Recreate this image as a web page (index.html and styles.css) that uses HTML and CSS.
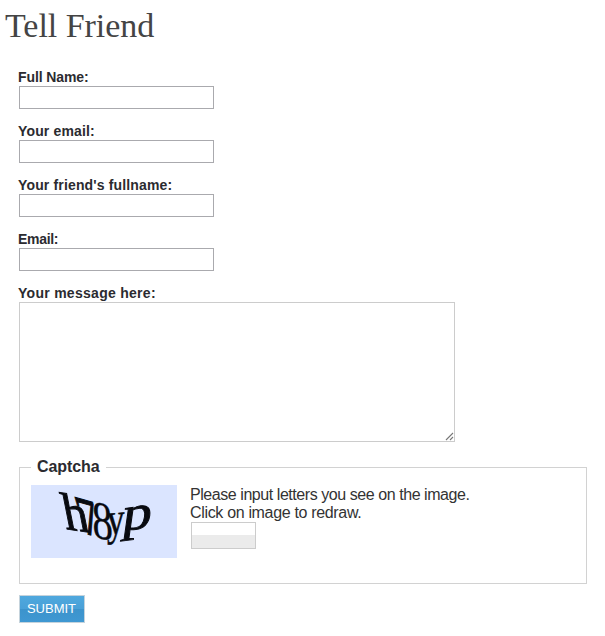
FILE: index.html
```html
<!DOCTYPE html>
<html lang="en">
<head>
<meta charset="utf-8">
<title>Tell Friend</title>
<link rel="stylesheet" href="styles.css">
</head>
<body>
<h1 class="title">Tell Friend</h1>
<form class="form">
  <div class="field"><label class="label" for="name">Full Name:</label><input class="input" id="name" type="text"></div>
  <div class="field"><label class="label mail" for="mail">Your email:</label><input class="input" id="mail" type="text"></div>
  <div class="field"><label class="label friend" for="friend">Your friend's fullname:</label><input class="input" id="friend" type="text"></div>
  <div class="field"><label class="label fmail" for="fmail">Email:</label><input class="input" id="fmail" type="text"></div>
  <div class="field"><label class="label message" for="message">Your message here:</label>
    <div class="area"><textarea class="textarea" id="message"></textarea>
      <svg class="grip" width="9" height="9" viewBox="0 0 9 9"><path d="M1 8L8 1M5 8L8 5" stroke="#777" stroke-width="1.1" fill="none"/></svg>
    </div>
  </div>
  <fieldset class="captcha">
    <legend class="legend">Captcha</legend>
    <div class="captcha-row">
      <svg class="captcha-image" width="146" height="73" viewBox="0 0 146 73">
        <g class="glyphs">
          <text transform="matrix(.95 .14 .2 1 35 44)" font-size="53" stroke-width="1">h</text>
          <text transform="matrix(.78 .22 .3 1 52 48)" font-size="56" stroke-width="1">7</text>
          <text transform="matrix(.76 .15 .05 1 62 52)" font-size="54" stroke-width=".3">8</text>
          <text transform="matrix(.76 -.06 0 1 76 50)" font-size="46" stroke-width=".5">y</text>
          <text transform="matrix(1.2 -.16 -.14 1 90 46)" font-size="49" stroke-width=".9">p</text>
        </g>
      </svg>
      <div class="captcha-side">
        <div class="hint wide">Please input letters you see on the image.</div>
        <div class="hint">Click on image to redraw.</div>
        <input class="code" type="text" aria-label="Letters">
      </div>
    </div>
  </fieldset>
  <button class="submit" type="button">SUBMIT</button>
</form>
</body>
</html>
```
FILE: styles.css
```css
* { box-sizing: border-box; }
body { margin: 0; background: #fff; color: #333; font-family: "Liberation Sans", Arial, sans-serif; }
.title {
  margin: 0; padding: 6px 0 0 5px; height: 68px;
  font: 400 34px/40px Georgia, "Liberation Serif", serif;
  letter-spacing: -.05px; color: #444;
}
.form { padding-left: 18px; }
.field { height: 54px; }
.label { display: block; height: 18px; font-size: 14px; line-height: 18px; font-weight: 700; color: #2b2b30; white-space: nowrap; letter-spacing: -.1px; }
.mail { letter-spacing: .15px; }
.friend { letter-spacing: .15px; }
.fmail { letter-spacing: -.3px; }
.message { letter-spacing: .28px; }
.input { display: block; width: 195px; height: 23px; margin: 0 0 0 1px; padding: 2px; border: 1px solid #aaaaae; outline: 0; }
.area { position: relative; width: 436px; margin-left: 1px; }
.textarea { display: block; width: 436px; height: 140px; margin: 0; padding: 4px; border: 1px solid #ccc; resize: none; outline: 0; font: 13px "Liberation Sans", sans-serif; }
.grip { position: absolute; right: 1px; bottom: 1px; }
.captcha { margin: 120px 0 0 1px; width: 568px; height: 126px; padding: 0 0 0 11px; border: 1px solid #d2d2d2; }
.legend { height: 18px; padding: 0 7px 0 6px; font-size: 16px; line-height: 18px; font-weight: 700; color: #2b2b30; letter-spacing: -.1px; }
.captcha-row { display: flex; gap: 13px; padding-top: 9px; }
.captcha-image { display: block; flex: none; background: #dbe5ff; }
.glyphs { font-family: "Liberation Serif", serif; fill: #080a10; stroke: #080a10; }
.captcha-side { padding-top: 1px; }
.hint { font-size: 16px; line-height: 18px; white-space: nowrap; letter-spacing: -.33px; }
.wide { letter-spacing: -.44px; }
.code { display: block; width: 65px; height: 27px; margin: 0 0 0 1px; padding: 2px; border: 1px solid #ccc; background: linear-gradient(#fff 50%, #ebebeb 50%); outline: 0; }
.submit { display: block; width: 66px; height: 28px; margin: 11px 0 0 1px; padding: 0 1px 0 0; border: 1px solid #c5d3dc; background: linear-gradient(#4fa8de, #49a0d7 50%, #3c93cc 50%, #3f98d2); color: #fff; font: 13px/26px "Liberation Sans", sans-serif; text-align: center; }
```
